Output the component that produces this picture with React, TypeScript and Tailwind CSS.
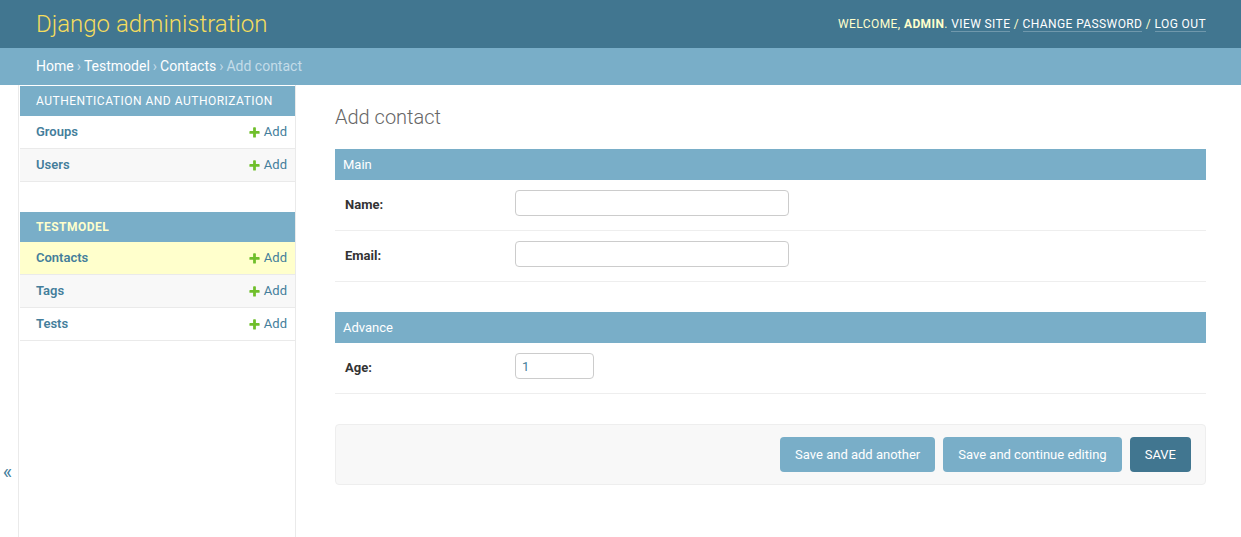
import React from "react";

type ModelRow = { name: string; current?: boolean };

const apps: { title: string; current?: boolean; models: ModelRow[] }[] = [
  {
    title: "Authentication and Authorization",
    models: [{ name: "Groups" }, { name: "Users" }],
  },
  {
    title: "Testmodel",
    current: true,
    models: [{ name: "Contacts", current: true }, { name: "Tags" }, { name: "Tests" }],
  },
];

// icono "+" verde del admin de Django
const AddIcon = () => (
  <svg width="13" height="13" viewBox="0 0 1792 1792" className="shrink-0">
    <path
      fill="#70bf2b"
      d="M1600 796v192q0 40-28 68t-68 28h-416v416q0 40-28 68t-68 28h-192q-40 0-68-28t-28-68v-416h-416q-40 0-68-28t-28-68v-192q0-40 28-68t68-28h416v-416q0-40 28-68t68-28h192q40 0 68 28t28 68v416h416q40 0 68 28t28 68z"
    />
  </svg>
);

const Sidebar: React.FC = () => (
  <nav className="w-[277px] shrink-0 border-r border-[#eaeaea] pl-[1px] pt-[1px]">
    {apps.map((app) => (
      <div key={app.title} className="mb-[30px]">
        <div
          className={
            app.current
              ? "h-[30px] flex items-center pl-[16px] bg-[#79aec8] text-[12px] tracking-[0.5px] uppercase font-bold text-[#ffffcc]"
              : "h-[30px] flex items-center pl-[16px] bg-[#79aec8] text-[12px] tracking-[0.5px] uppercase text-white"
          }
        >
          {app.title}
        </div>
        {app.models.map((m, i) => (
          <div
            key={m.name}
            className={
              "h-[33px] flex items-center justify-between pl-[16px] pr-[8px] border-b border-[#eaeaea] text-[13px] " +
              (m.current ? "bg-[#ffffcc]" : i % 2 === 1 ? "bg-[#f8f8f8]" : "bg-white")
            }
          >
            <a className="font-semibold text-[#447e9b]">{m.name}</a>
            <a className="flex items-center gap-[3px] text-[#447e9b]">
              <AddIcon />
              Add
            </a>
          </div>
        ))}
      </div>
    ))}
  </nav>
);

const FormRow: React.FC<{ label: string; value?: string; short?: boolean }> = ({ label, value, short }) => (
  <div className="flex items-start py-[10px] border-b border-[#eeeeee]">
    <label className="w-[180px] pl-[10px] pt-[4px] h-[26px] flex items-center text-[13px] font-bold text-[#333333]">
      {label}
    </label>
    <input
      type="text"
      defaultValue={value}
      className={
        "h-[26px] mb-[4px] border border-[#cccccc] rounded-[4px] px-[6px] text-[13px] text-[#447e9b] outline-none " +
        (short ? "w-[79px]" : "w-[274px]")
      }
    />
  </div>
);

const Fieldset: React.FC<{ title: string; children: React.ReactNode }> = ({ title, children }) => (
  <fieldset className="mb-[30px]">
    <h2 className="h-[31px] flex items-center px-[8px] bg-[#79aec8] text-[13px] text-white">{title}</h2>
    {children}
  </fieldset>
);

export default function App() {
  return (
    <div className="min-h-[537px] bg-white font-[Roboto,'Liberation_Sans',sans-serif] text-[#333333]">
      {/* cabecera */}
      <header className="h-[48px] bg-[#417690] flex items-center justify-between pl-[36px] pr-[35px]">
        <h1 className="text-[24px] font-light text-[#f5dd5d]">Django administration</h1>
        <div className="text-[12px] uppercase tracking-[0.4px] text-[#ffffcc]">
          Welcome, <strong className="font-bold">admin</strong>.{" "}
          <a className="text-white border-b border-white/25">View site</a> /{" "}
          <a className="text-white border-b border-white/25">Change password</a> /{" "}
          <a className="text-white border-b border-white/25">Log out</a>
        </div>
      </header>

      {/* migas de pan */}
      <div className="h-[37px] bg-[#79aec8] flex items-center pl-[36px] text-[14px] text-[#c4dce8]">
        <a className="text-white">Home</a>
        <span className="mx-[3px]">›</span>
        <a className="text-white">Testmodel</a>
        <span className="mx-[3px]">›</span>
        <a className="text-white">Contacts</a>
        <span className="mx-[3px]">›</span>
        Add contact
      </div>

      <div className="flex min-h-[452px]">
        <div className="w-[19px] shrink-0 border-r border-[#eaeaea] flex justify-center pr-[3px] pt-[374px] text-[20px] text-[#447e9b] leading-[26px]">
          «
        </div>
        <Sidebar />

        <main className="flex-1 pl-[39px] pr-[35px] pt-[20px]">
          <h1 className="text-[20px] font-light text-[#666666] leading-[24px] mb-[20px]">Add contact</h1>

          <Fieldset title="Main">
            <FormRow label="Name:" />
            <FormRow label="Email:" />
          </Fieldset>

          <Fieldset title="Advance">
            <FormRow label="Age:" value="1" short />
          </Fieldset>

          <div className="flex justify-end gap-[8px] px-[14px] py-[12px] bg-[#f8f8f8] border border-[#eeeeee] rounded-[4px]">
            <button className="h-[35px] px-[15px] rounded-[4px] bg-[#79aec8] text-[13px] text-white">
              Save and add another
            </button>
            <button className="h-[35px] px-[15px] rounded-[4px] bg-[#79aec8] text-[13px] text-white">
              Save and continue editing
            </button>
            <button className="h-[35px] px-[15px] rounded-[4px] bg-[#417690] text-[13px] text-white">SAVE</button>
          </div>
        </main>
      </div>
    </div>
  );
}
